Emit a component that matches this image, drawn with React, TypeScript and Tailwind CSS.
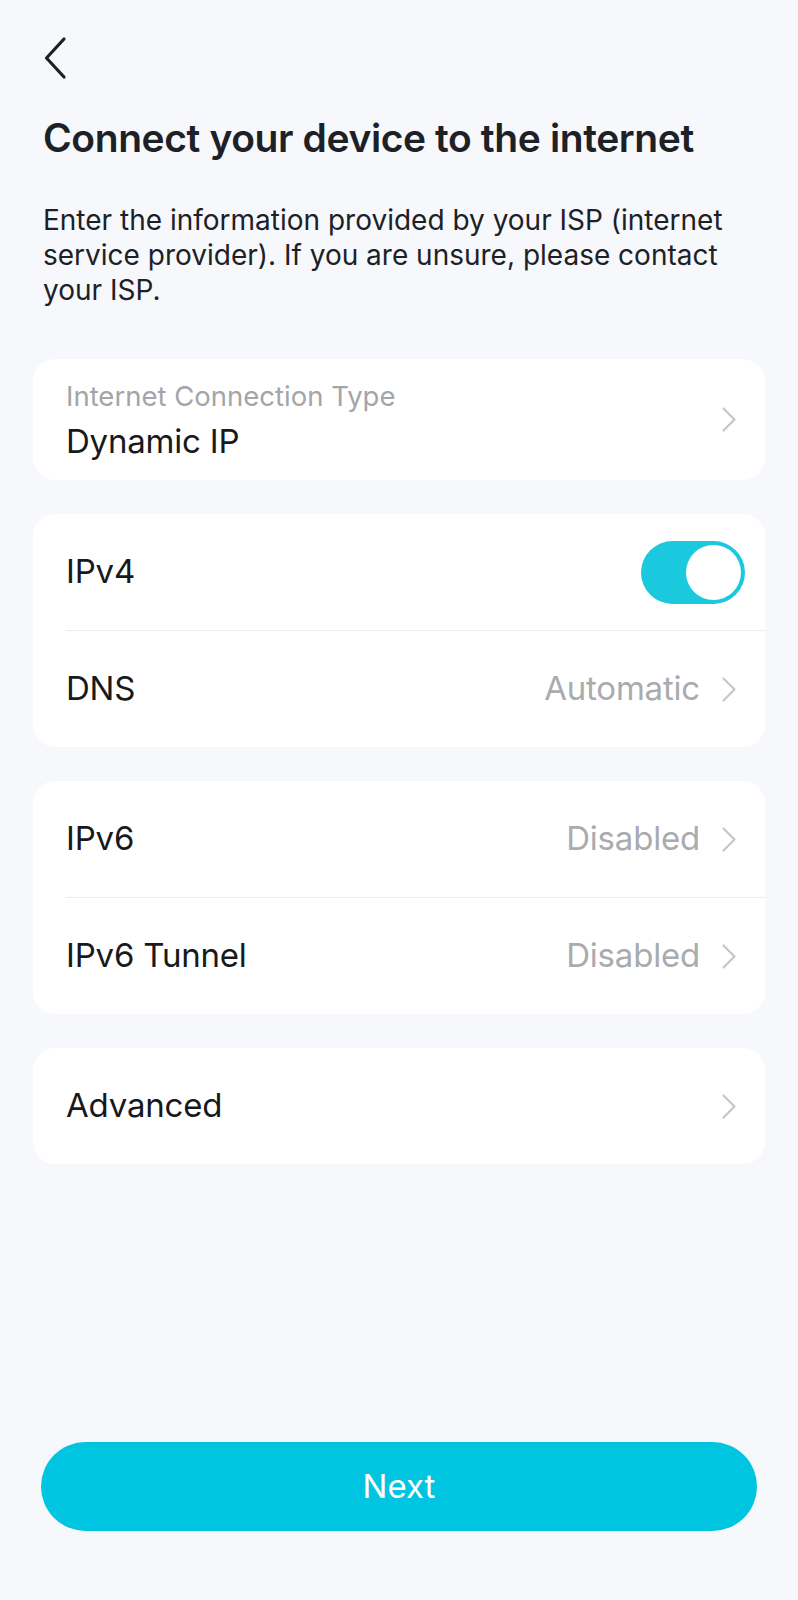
import React, { useState } from 'react';

const font = { fontFamily: 'Inter, "Noto Sans", "Liberation Sans", sans-serif' };

const Chevron: React.FC = () => (
  <svg width="16" height="27" viewBox="0 0 16 27" fill="none" className="shrink-0">
    <path d="M2.5 2.5 L13.5 13.5 L2.5 24.5" stroke="#c4c6c9" strokeWidth="2.2" strokeLinecap="round" strokeLinejoin="round" />
  </svg>
);

const Row: React.FC<{ label: string; value?: string; children?: React.ReactNode }> = ({ label, value, children }) => (
  <div className="h-[116px] flex items-center justify-between pl-[33px] pr-[28px]">
    <span className="text-[33px] text-[#17191c] tracking-[-0.2px]">{label}</span>
    {children ?? (
      <div className="flex items-center gap-[21px]">
        {value && <span className="text-[33px] text-[#a9abae] tracking-[-0.2px]">{value}</span>}
        <Chevron />
      </div>
    )}
  </div>
);

const Divider: React.FC = () => <div className="ml-[33px] h-px bg-[#ececee]" />;

const App: React.FC = () => {
  const [ipv4, setIpv4] = useState(true);

  return (
    <div style={font} className="min-h-[1600px] bg-[#f6f8fc] flex flex-col px-[33px]">
      {/* back */}
      <button className="mt-[36px] ml-[10px] h-[44px] w-[26px] flex items-center">
        <svg width="24" height="44" viewBox="0 0 24 44" fill="none">
          <path d="M21 3 L3.5 22 L21 41" stroke="#1d2126" strokeWidth="3.2" strokeLinecap="round" strokeLinejoin="round" />
        </svg>
      </button>

      <h1 className="mt-[36px] ml-[10px] text-[39px] leading-[44px] font-semibold text-[#1d2126] tracking-[-0.4px]">
        Connect your device to the internet
      </h1>

      <p className="mt-[43px] ml-[10px] mr-[20px] text-[28px] leading-[35px] text-[#1d2126]">
        Enter the information provided by your ISP (internet service provider). If you are unsure, please contact your ISP.
      </p>

      {/* connection type */}
      <div className="mt-[51px] h-[121px] bg-white rounded-[22px] flex items-center justify-between pl-[33px] pr-[28px]">
        <div className="flex flex-col">
          <span className="text-[27.5px] leading-[30px] text-[#a3a5a8]">Internet Connection Type</span>
          <span className="mt-[12px] text-[33px] leading-[36px] text-[#17191c] tracking-[-0.2px]">Dynamic IP</span>
        </div>
        <Chevron />
      </div>

      <div className="mt-[34px] bg-white rounded-[22px]">
        <Row label="IPv4">
          <button
            onClick={() => setIpv4(!ipv4)}
            className={`mr-[-8px] w-[104px] h-[63px] rounded-full p-[4px] flex ${ipv4 ? 'bg-[#1bc9df] justify-end' : 'bg-[#d9dbde] justify-start'}`}
          >
            <span className="block w-[55px] h-[55px] rounded-full bg-white" />
          </button>
        </Row>
        <Divider />
        <Row label="DNS" value="Automatic" />
      </div>

      <div className="mt-[34px] bg-white rounded-[22px]">
        <Row label="IPv6" value="Disabled" />
        <Divider />
        <Row label="IPv6 Tunnel" value="Disabled" />
      </div>

      <div className="mt-[34px] bg-white rounded-[22px]">
        <Row label="Advanced" />
      </div>

      <button className="mt-auto mb-[69px] mx-[8px] h-[89px] rounded-full bg-[#00c5e1] text-white text-[33px]">
        Next
      </button>
    </div>
  );
};

export default App;
